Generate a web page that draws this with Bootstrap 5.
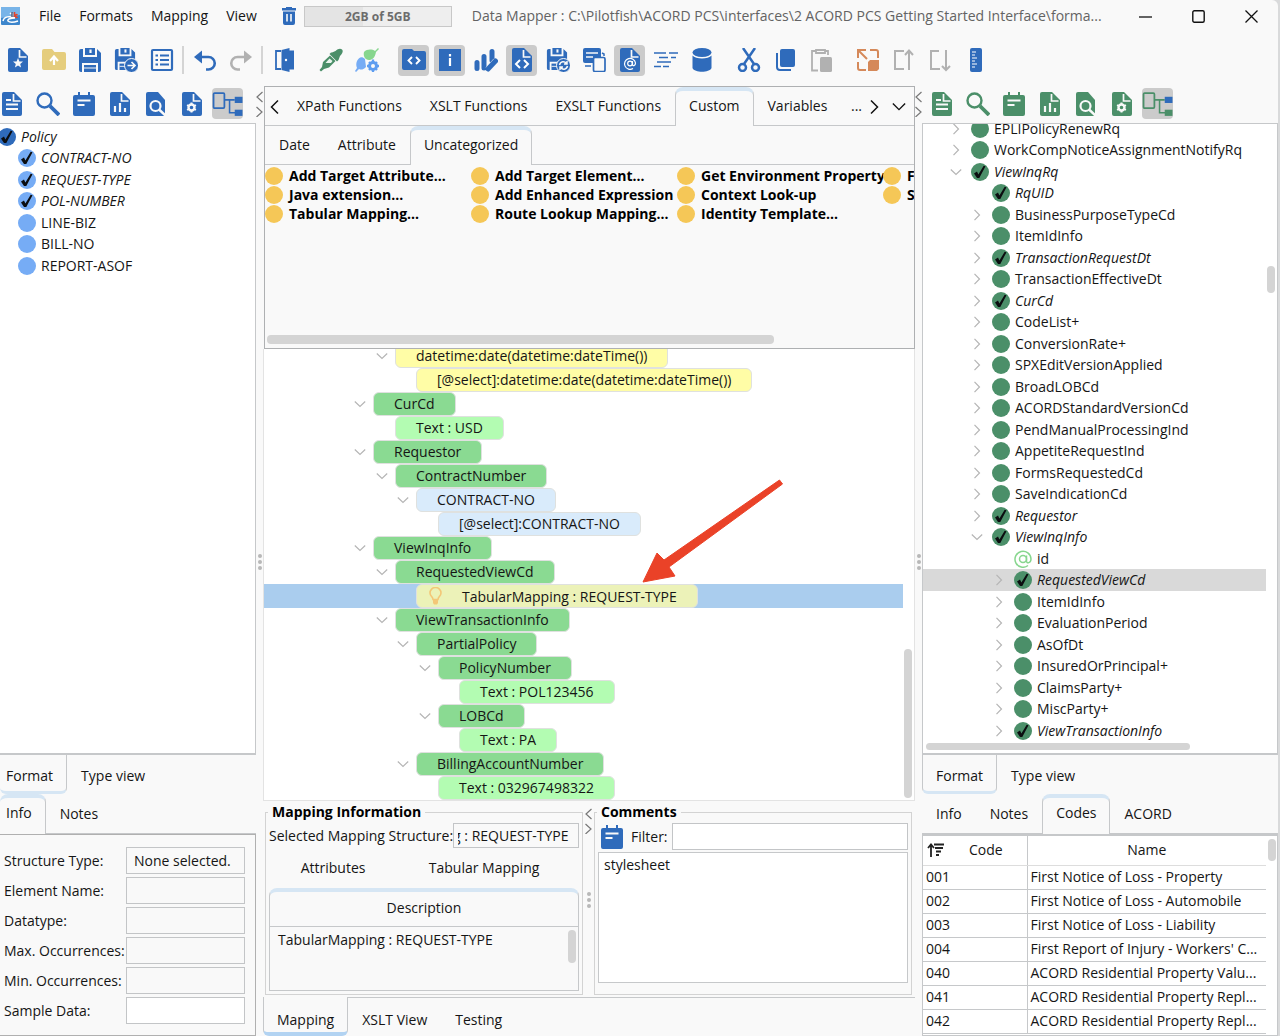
<!DOCTYPE html>
<html lang="en">
<head>
<meta charset="utf-8">
<meta name="viewport" content="width=device-width, initial-scale=1">
<title>Data Mapper</title>
<link rel="stylesheet" href="https://cdn.jsdelivr.net/npm/bootstrap@5.3.0/dist/css/bootstrap.min.css">
<style>
:root{--blue:#2f6bbb;--green:#4b8f69;--line:#c6c8ca;--bg:#f9f9f9}
body{background:#d9dadb;font-family:"Open Sans","Noto Sans",sans-serif;font-size:14px;line-height:20px;color:#151515;white-space:nowrap}
button,input,textarea{font:inherit;color:inherit}
.app{height:100vh;margin-right:2px;background:var(--bg);border-top-right-radius:6px;overflow:hidden}
.bare{border:0;background:none;padding:0;color:inherit}
.titlebar{height:32px}
.menus{gap:18px;margin:0 25px 0 18px}
.menu-link{color:#151515;text-decoration:none}
.mem{width:148px;height:21px;border:1px solid #c8c8c8;background:linear-gradient(90deg,#e4e4e4 40%,#eeeeee 40%);font-weight:700;font-size:12px;line-height:20px;color:#6c6c6c}
.title-text{color:#636363}
.toolbar{height:54px;gap:5px;padding:2px 0 0 2px}
.tool{width:31px;height:31px;border:0;border-radius:4px;background:none;padding:0;color:var(--blue);display:flex;align-items:center;justify-content:center;flex:none}
.tool.on{background:#cbcbcb}
.tool svg{width:24px;height:24px}
.tool.off{color:#b1b1b1}
.vsep{width:2px;height:28px;background:#d4d4d4}
.space{width:6px}
.work{display:grid;grid-template-columns:256fr 7px 652fr 7px 356fr;flex:1;min-height:0}
.side,.center{display:flex;flex-direction:column;min-width:0;min-height:0}
.sidebar-tools{height:37px;gap:5px;flex:none;padding-bottom:2px}
.sidebar-tools.src{margin-left:-4px}
.sidebar-tools.dst{padding-left:4px}
.dst .tool{color:var(--green)}
.treebox{flex:1;min-height:0;background:#fff;border:1px solid var(--line);border-bottom-width:2px;overflow:hidden;position:relative}
.src-box{border-left:0}
.tr-row{height:21px;display:flex;align-items:center}
.tr-row:nth-child(even){height:22px}
.it{font-style:italic}
.in1{padding-left:27px}.in2{padding-left:48px}.in3{padding-left:70px}
.chev{width:12px;height:12px;margin-right:9px;color:#b5b5b5;flex:none}
.dot{width:18px;height:18px;margin-right:5px;flex:none;color:#76acf5}
.dot.g{color:var(--green)}.dot.b{color:var(--blue)}.dot.y{color:#f5c757;margin-right:6px}
.tree-src{margin:2px 0 0 -2px}
.tree-src .kid{padding-left:20px}
.tree-dst{margin-top:-6px;width:343px}
.picked{background:#d9d9d9}
.thumb{position:absolute;background:#d4d4d4;border-radius:4px}
.v-dst{width:8px;right:2px;top:142px;height:27px}
.h-dst{height:7px;left:3px;bottom:3px;width:264px}
.gutter{position:relative;color:#777;display:flex;flex-direction:column;align-items:center}
.gutter .arrows{width:9px;height:26px;margin-top:5px;flex:none}
.gutter .grip{position:absolute;top:50%;margin-top:-7px;width:4px;height:16px}
.tabrow{display:flex;align-items:stretch;flex:none;height:40px}
.palette .tabrow{height:39px}
.tb{border:0;background:none;padding:0 14px;color:inherit;display:flex;align-items:center;justify-content:center;flex:none;text-decoration:none}
.topline{border-bottom:1px solid var(--line)}
.topline .tb.act{border:1px solid var(--line);border-top:4px solid #d6e6f4;border-bottom:0;border-radius:8px 8px 0 0;margin-bottom:-1px;background:var(--bg);padding:0 13px 6px}
.botline{height:39px}
.botline .tb{padding-top:2px}
.botline .tb.act{border:1px solid var(--line);border-bottom:3px solid #d6e6f4;border-top:0;border-radius:0 0 6px 6px;background:var(--bg);padding:5px 13px 0}
.src-tabs .tb.act:first-child{border-left:0;padding-left:6px}
.info{border:1px solid #b0b0b0;border-left:0;padding:12px 10px 11px 4px;display:grid;grid-template-columns:122px 1fr;row-gap:3px;align-items:center;flex:none}
.fld{height:27px;width:100%;min-width:0;border:1px solid #c3c5c7;border-radius:0;background:var(--bg);padding:0 7px}
.fld.w{background:#fff}
.palette{border:1px solid #aeb0b2;height:263px;flex:none;overflow:hidden;position:relative;margin-left:1px}
.fn-list{display:grid;grid-template-columns:repeat(4,206px);grid-auto-rows:19px;align-items:center;padding-top:1px}
.fn-list button{border:0;background:none;padding:0;display:flex;align-items:center;font-weight:700;height:19px;color:#000}
.h-pal{height:9px;left:2px;bottom:4px;width:507px}
.maptree{flex:1;min-height:0;background:#fff;border:1px solid #e3e3e3;border-top:0;overflow:hidden;position:relative}
.maplist{margin-top:-5px;width:639px}
.mrow{height:24px;display:flex;align-items:center}
.m0{padding-left:90px}.m1{padding-left:112px}.m2{padding-left:133px}.m3{padding-left:155px}.m4{padding-left:176px}
.mrow .chev{margin-right:7px}
.leaf::before{content:"";width:19px;flex:none}
.node{height:24px;border:1px solid #dfe1df;border-radius:6px;padding:0 20px;line-height:21px}
.ng{background:#8ada92}.nl{background:#b3fcb2}.ny{background:#fffda6}.nb{background:#d9ebfb}.nh{background:#ecf2b8}
.hit{background:#aacdee}
.v-map{width:8px;right:2px;bottom:2px;height:149px}
.pointer{position:absolute;left:370px;top:126px;width:156px;height:114px}
.lower{height:196px;flex:none;display:grid;grid-template-columns:318fr 11px 318fr;padding:2px 3px 2px 2px}
fieldset.grp{border:1px solid #d3d3d3;padding:0 3px 3px;min-width:0;display:flex;flex-direction:column}
.grp legend{float:none;width:auto;font-size:14px;font-weight:700;line-height:18px;margin:0 0 0 -1px;padding:0 4px;color:#000}
.sel-row{margin-top:2px}
.clip-fld{height:25px;text-indent:-5px;padding:0 4px}
.desc-tab{height:39px;flex:none;border:1px solid var(--line);border-top:4px solid #d6e6f4;border-radius:8px 8px 0 0;padding-bottom:3px}
.desc-body{border:1px solid var(--line);border-top:0;height:64px;flex:none;position:relative;padding:3px 8px}
.v-desc{width:8px;right:2px;top:3px;height:33px}
.note-btn{margin-left:-2px}
.cm-text{border:1px solid var(--line);border-radius:0;resize:none;height:131px;padding:2px 5px;width:100%;display:block}
.bottom-tabs{border-top:1px solid var(--line)}
.bottom-tabs .tb{padding-top:6px}
.bottom-tabs .tb.act{border-bottom:4px solid #b2d3f2;margin-top:-1px;padding-top:10px}
.codes{height:202px;flex:none;border:1px solid var(--line);border-top:2px solid var(--line);background:#fff;overflow:hidden;position:relative}
.codes table{width:calc(100% - 11px);table-layout:fixed;border-collapse:collapse}
.codes th{height:29px;font-weight:400;text-align:center;padding:0;border-bottom:1px solid #ddd}
.codes td{height:24px;padding:0 3px;border-bottom:1px solid var(--line);overflow:hidden}
.codes th+th,.codes td+td{border-left:1px solid var(--line)}
.codes col:first-child{width:104px}
.v-codes{width:8px;right:1px;top:3px;height:22px}
</style>
</head>
<body>
<svg width="0" height="0" class="position-absolute" aria-hidden="true">
<defs>
<symbol id="right" viewBox="0 0 12 12"><path d="M3.500 .8 8.500 6l-5 5.200" fill="none" stroke="currentColor" stroke-width="1.200"/></symbol>
<symbol id="down" viewBox="0 0 12 12"><path d="M.8 3.500 6 8.500l5.200-5" fill="none" stroke="currentColor" stroke-width="1.200"/></symbol>
<symbol id="ball" viewBox="0 0 18 18"><circle cx="9" cy="9" r="9" fill="currentColor"/></symbol>
<symbol id="ballcheck" viewBox="0 0 18 18"><circle cx="9" cy="9" r="9" fill="currentColor"/><path d="M3 10.500 6 8.600 7.400 11.500 12.700 2.800 14.500 3.200 8.300 15 6 15z" fill="#0b0d10"/></symbol>
<symbol id="arrows" viewBox="0 0 9 26"><path d="M7.500 1 2 6l5.500 5M1.500 16 7 21l-5.500 5" fill="none" stroke="currentColor" stroke-width="1.200"/></symbol>
<symbol id="grip" viewBox="0 0 4 16"><g fill="#b8b8b8"><circle cx="2" cy="2" r="2"/><circle cx="2" cy="8" r="2"/><circle cx="2" cy="14" r="2"/></g></symbol>
<symbol id="doc" viewBox="0 0 24 24"><path d="M4 0h10l8 8v14a2 2 0 0 1-2 2H4a2 2 0 0 1-2-2V2a2 2 0 0 1 2-2z" fill="currentColor"/><path d="M13.500 2v7h7" fill="none" stroke="#f9f9f9" stroke-width="1.700"/></symbol>
<symbol id="doclines" viewBox="0 0 24 24"><use href="#doc"/><path d="M6 8h5M6 12.500h12M6 17h12" stroke="#f9f9f9" stroke-width="2"/></symbol>
<symbol id="lens" viewBox="0 0 24 24"><circle cx="8.500" cy="8.500" r="7" fill="none" stroke="currentColor" stroke-width="2.400"/><path d="m14 14 9 9" stroke="currentColor" stroke-width="3.800"/></symbol>
<symbol id="notes" viewBox="0 0 24 24"><path d="M3 3h3V0h2v3h8V0h2v3h3a2 2 0 0 1 2 2v17a2 2 0 0 1-2 2H3a2 2 0 0 1-2-2V5a2 2 0 0 1 2-2z" fill="currentColor"/><path d="M5.500 8.500h13M5.500 13h7" stroke="#f9f9f9" stroke-width="2"/></symbol>
<symbol id="docbars" viewBox="0 0 24 24"><use href="#doc"/><path d="M7 20v-6M12 20v-9M17 20v-4" stroke="#f9f9f9" stroke-width="2.200"/></symbol>
<symbol id="doclens" viewBox="0 0 24 24"><path d="M4 0h10l7 8v14a2 2 0 0 1-2 2H4a2 2 0 0 1-2-2V2a2 2 0 0 1 2-2z" fill="currentColor"/><circle cx="11.500" cy="14" r="5" fill="none" stroke="#f9f9f9" stroke-width="2.200"/><path d="m15 17.500 7 6.500" stroke="#f9f9f9" stroke-width="2.400"/></symbol>
<symbol id="docgear" viewBox="0 0 24 24"><use href="#doc"/><circle cx="11.500" cy="15.500" r="3" fill="none" stroke="#f9f9f9" stroke-width="2.400"/><path d="M11.500 10.500v2m0 6v2m-4.400-7.500 1.800 1m5.200 3 1.800 1m-8.800 0 1.800-1m5.200-3 1.800-1" stroke="#f9f9f9" stroke-width="2"/></symbol>
<symbol id="maptree" viewBox="0 0 30 26"><rect x="1.500" y="3" width="10.500" height="14.500" rx="1" fill="none" stroke="currentColor" stroke-width="1.700"/><path d="M12 9.500h10M17 9.500V22h6" fill="none" stroke="currentColor" stroke-width="1.500"/><rect x="22" y="6.500" width="7.500" height="6" fill="#2f6bbb"/><rect x="22" y="19" width="7.500" height="6" fill="currentColor"/></symbol>
<symbol id="floppy" viewBox="0 0 24 24"><path d="M3 1h2v8h14V1l4 4v17a2 2 0 0 1-2 2h-1v-9H4v9H3a2 2 0 0 1-2-2V3a2 2 0 0 1 2-2z" fill="currentColor"/><path d="M7 0h10v7H7z" fill="currentColor"/><path d="M12.500 1.500v3.500" stroke="#f9f9f9" stroke-width="2.200"/><path d="M6 17h12v7H6z" fill="currentColor"/><path d="M6 20h12" stroke="#f9f9f9"/></symbol>
</defs>
</svg>

<div class="app d-flex flex-column">
<header class="titlebar d-flex align-items-center flex-shrink-0">
  <svg class="flex-shrink-0" width="21" height="20" viewBox="0 0 21 20" aria-label="PilotFish"><rect x="1" y="1" width="19" height="18" rx="1" fill="#3d86cc"/><path d="M1 1h19v8L1 12z" fill="#78b4e8"/><path d="M3 15c1-5 7-5 12-3-4 0-8 1-7 3 2 2 7 1 10 0M10 8c2-2 3-1 2 3" fill="none" stroke="#fff" stroke-width="1.500"/><path d="M14.500 6v5M17.500 9c-1.500-1-2 0-2 1s1 2 2 1" fill="none" stroke="#e4452c" stroke-width="1.600"/><path d="M12 6v5" stroke="#28395b" stroke-width="1.200"/></svg>
  <nav class="menus d-flex">
    <a class="menu-link" href="#">File</a><a class="menu-link" href="#">Formats</a><a class="menu-link" href="#">Mapping</a><a class="menu-link" href="#">View</a>
  </nav>
  <button class="bare me-2 lh-1" aria-label="Free memory"><svg width="14" height="18" viewBox="0 0 14 18"><path d="M0 1h4V0h6v1h4v2.500H0zM1 4.500h12V16a2 2 0 0 1-2 2H3a2 2 0 0 1-2-2z" fill="#2f6bbb"/><path d="M5 7v7.500M9 7v7.500" stroke="#f9f9f9" stroke-width="1.600"/></svg></button>
  <div class="mem text-center">2GB of 5GB</div>
  <div class="title-text ms-3 ps-1">Data Mapper : C:\Pilotfish\ACORD PCS\interfaces\2 ACORD PCS Getting Started Interface\forma...</div>
  <div class="ms-auto d-flex align-items-center gap-4 pe-3 me-1">
    <button class="bare lh-1 me-3" aria-label="Minimize"><svg width="13" height="13"><path d="M0 7h13" stroke="#111" stroke-width="1.300"/></svg></button>
    <button class="bare lh-1 me-3" aria-label="Maximize"><svg width="13" height="13"><rect x=".8" y=".8" width="11.400" height="11.400" rx="1.500" fill="none" stroke="#111" stroke-width="1.400"/></svg></button>
    <button class="bare lh-1" aria-label="Close"><svg width="13" height="13"><path d="m.5.5 12 12m0-12-12 12" stroke="#111" stroke-width="1.300"/></svg></button>
  </div>
</header>

<div class="toolbar d-flex align-items-center flex-shrink-0" role="toolbar">
  <button class="tool" aria-label="New"><svg viewBox="0 0 24 24"><use href="#doc"/><path d="m12 10 1.400 3.400 3.600.2-2.800 2.400.9 3.500-3.100-1.900-3.100 1.900.9-3.500L7 13.600l3.600-.2z" fill="#f9f9f9"/></svg></button>
  <button class="tool" aria-label="Open"><svg viewBox="0 0 24 24"><path d="M2 1h8l2.500 3H22a2 2 0 0 1 2 2v14a2 2 0 0 1-2 2H2a2 2 0 0 1-2-2V3a2 2 0 0 1 2-2z" fill="#e5cd7d"/><path d="M12 17V9m-4 4 4-4.500 4 4.500" fill="none" stroke="#fff" stroke-width="2.200"/></svg></button>
  <button class="tool" aria-label="Save"><svg><use href="#floppy"/></svg></button>
  <button class="tool" aria-label="Save as"><svg viewBox="0 0 24 24"><use href="#floppy" width="22" height="22"/><circle cx="17.500" cy="17.500" r="7" fill="#2f6bbb" stroke="#f9f9f9"/><path d="M13.500 17.500h7m-3-3.500 3.500 3.500-3.500 3.500" fill="none" stroke="#f9f9f9" stroke-width="1.700"/></svg></button>
  <button class="tool" aria-label="List"><svg viewBox="0 0 24 24"><rect x="2" y="2" width="20" height="20" rx="1" fill="none" stroke="currentColor" stroke-width="2.200"/><path d="M5.500 7.500h2.500M5.500 12h2.500M5.500 16.500h2.500M10 7.500h9M10 12h9M10 16.500h9" stroke="currentColor" stroke-width="2.200"/></svg></button>
  <span class="vsep"></span>
  <button class="tool" aria-label="Undo"><svg viewBox="0 0 24 24"><path d="M5 9h10.500a6 6 0 0 1 0 12.500H13" fill="none" stroke="currentColor" stroke-width="2.600"/><path d="m1 9 8-6.500v13z" fill="currentColor"/></svg></button>
  <button class="tool off" aria-label="Redo"><svg viewBox="0 0 24 24"><path d="M19 9H8.500a6 6 0 0 0 0 12.500H11" fill="none" stroke="currentColor" stroke-width="2.600"/><path d="m23 9-8-6.500v13z" fill="currentColor"/></svg></button>
  <span class="vsep"></span>
  <button class="tool" aria-label="Exit"><svg viewBox="0 0 24 24"><path d="M9 3H4v18h5" fill="none" stroke="currentColor" stroke-width="1.800"/><path d="m9.500 2 8-2v24l-8-2zM17 2.500h5v19h-5z" fill="currentColor"/><circle cx="14" cy="12" r="1.200" fill="#fff"/></svg></button>
  <span class="space"></span>
  <button class="tool" aria-label="Pick"><svg viewBox="0 0 24 24" fill="#4b8f69"><path d="M13 4.500 16.500 3C19 .5 21.500 0 23 1.500s.5 4-2 6.500L19.500 12 18 13.500 10.500 6 12 4.500z"/><path d="m11 7.500 5.500 5.500-6.500 6.500-5 1.500-3 2.500L.5 22 3 19l1-5z"/><path d="m10.500 10.500-4 4.500h5.500l1.500-2z" fill="#eaf5ee"/></svg></button>
  <button class="tool" aria-label="Mapping options"><svg viewBox="0 0 24 24"><path d="M9 4c3-3 8-3 11-1l3-3 1 1-3 3c-1 6-4 8-7 8-4 0-6-4-5-8z" fill="#87d68e"/><path d="M2 13c2-4 5-5 8-2l1 8c-3 3-5 3-7 2l-3 3-1-1 2-3c-1-2-1-5 0-7z" fill="#76acf5"/><circle cx="18" cy="18" r="3.500" fill="none" stroke="#5e9df0" stroke-width="3"/><path d="M18 11.500v3m0 7v3M12 18h2.500m7 0H24m-10-4 1.500 1.500m5 5L22 22m-8 0 1.500-1.500m5-5L22 14" stroke="#5e9df0" stroke-width="2.300"/></svg></button>
  <span class="space"></span>
  <button class="tool on" aria-label="Code folder"><svg viewBox="0 0 24 24"><path d="M2 1h8l2 2h10a2 2 0 0 1 2 2v15a2 2 0 0 1-2 2H2a2 2 0 0 1-2-2V3a2 2 0 0 1 2-2z" fill="currentColor"/><path d="m10 9-3.500 3.500L10 16m4-7 3.500 3.500L14 16" fill="none" stroke="#fff" stroke-width="1.900"/></svg></button>
  <button class="tool on" aria-label="Info"><svg viewBox="0 0 24 24"><path d="M1 1h22v22H1z" fill="currentColor"/><path d="M12 6v2.500M12 10v8" stroke="#fff" stroke-width="2.200"/></svg></button>
  <button class="tool" aria-label="Chart"><svg viewBox="0 0 24 24"><path d="M3 14.500v6M10 8.500V20M18 3.500v9" stroke="currentColor" stroke-width="5" stroke-linecap="round"/><path d="m14 22 8-9" stroke="#f9f9f9" stroke-width="6.500"/><path d="m14 21 7.500-8" stroke="currentColor" stroke-width="5" stroke-linecap="round"/></svg></button>
  <button class="tool on" aria-label="Code file"><svg viewBox="0 0 24 24"><use href="#doc"/><path d="m10 12-4 4 4 4m4-8 4 4-4 4" fill="none" stroke="#fff" stroke-width="2"/></svg></button>
  <button class="tool" aria-label="Save and refresh"><svg viewBox="0 0 24 24"><use href="#floppy" width="22" height="22"/><circle cx="17.500" cy="17.500" r="7" fill="#2f6bbb" stroke="#f9f9f9"/><path d="M13.500 17c1-4 5-4 7-1.500M21 13v3h-3M21.500 18c-1 4-5 4-7 1.500M14 22v-3h3" fill="none" stroke="#f9f9f9" stroke-width="1.500"/></svg></button>
  <button class="tool" aria-label="Copy notes"><svg viewBox="0 0 24 24"><path d="M3 0h14a2 2 0 0 1 2 2v13H3a2 2 0 0 1-2-2V2a2 2 0 0 1 2-2z" fill="currentColor"/><path d="M4 5h12M4 9h7" stroke="#f9f9f9" stroke-width="1.700"/><rect x="11.500" y="9.500" width="11.500" height="14" rx="1.500" fill="#f9f9f9" stroke="currentColor" stroke-width="1.700"/><path d="M3 18h6M20 5l2 1v2" stroke="currentColor" stroke-width="1.500" fill="none"/></svg></button>
  <button class="tool on" aria-label="Attributes"><svg viewBox="0 0 24 24"><use href="#doc"/><path d="M15 20.500A5.500 5.500 0 1 1 17.500 15c0 3-3 3.500-3 1.500v-3.500" fill="none" stroke="#fff" stroke-width="1.200"/><circle cx="12" cy="15.500" r="2.300" fill="none" stroke="#fff" stroke-width="1.200"/></svg></button>
  <button class="tool" aria-label="Format"><svg viewBox="0 0 24 24"><path d="M0 5h12m3 0h9M5 9.500h9m3 0h5M3 14h14M0 18.500h7m2 0h6" stroke="currentColor" stroke-width="1.600"/></svg></button>
  <button class="tool" aria-label="Database"><svg viewBox="0 0 24 24"><ellipse cx="12" cy="4.500" rx="9.500" ry="4.500" fill="currentColor"/><path d="M2.500 7.500c3 4 16 4 19 0V20c-2 5-17 5-19 0z" fill="currentColor"/></svg></button>
  <span class="space"></span>
  <button class="tool" aria-label="Cut"><svg viewBox="0 0 24 24" fill="none" stroke="currentColor" stroke-width="2.500"><path d="M6 0l11 16M18 0 7 16"/><circle cx="5.500" cy="19.500" r="3.500"/><circle cx="18.500" cy="19.500" r="3.500"/></svg></button>
  <button class="tool" aria-label="Copy"><svg viewBox="0 0 24 24"><rect x="7" y="1" width="15" height="18" rx="2" fill="currentColor"/><path d="M4 5v14q0 3 3 3h11" fill="none" stroke="currentColor" stroke-width="2"/></svg></button>
  <button class="tool off" aria-label="Paste"><svg viewBox="0 0 24 24"><path d="M9 22.500H3V3h4m9 0h3v4M7 2h9v3H7z" fill="none" stroke="currentColor" stroke-width="1.800"/><rect x="11" y="9" width="12" height="15" rx="1.500" fill="currentColor"/></svg></button>
  <span class="space"></span>
  <button class="tool" aria-label="Collapse"><svg viewBox="0 0 24 24" fill="none" stroke="#d5895a" stroke-width="2"><path d="M14 2h6q2 0 2 2v6M2 14v6q0 2 2 2h6M2 10V2h8M3 3l8 8"/><path d="M14 12h9v9l-2 2h-9v-9z" fill="#d5895a" stroke="none"/></svg></button>
  <button class="tool off" aria-label="Move up"><svg viewBox="0 0 24 24" fill="none" stroke="currentColor" stroke-width="2"><path d="M12 3H3v18h9m5 1V3m-4 4 4-4.500L21 7"/></svg></button>
  <button class="tool off" aria-label="Move down"><svg viewBox="0 0 24 24" fill="none" stroke="currentColor" stroke-width="2"><path d="M11 3H3v18h9m6-19v20m-4-4 4 4 4-4"/></svg></button>
  <button class="tool" aria-label="Ruler"><svg viewBox="0 0 24 24"><rect x="6" y="0" width="12" height="24" rx="2" fill="currentColor"/><path d="M8 4h4M8 7h3M8 10h5M8 13h3M8 16h5M8 19h3" stroke="#fff" stroke-width="1.200"/></svg></button>
</div>

<main class="work">
<section class="side">
  <div class="sidebar-tools src d-flex align-items-center">
    <button class="tool" aria-label="Source document"><svg><use href="#doclines"/></svg></button>
    <button class="tool" aria-label="Search source"><svg><use href="#lens"/></svg></button>
    <button class="tool" aria-label="Source notes"><svg><use href="#notes"/></svg></button>
    <button class="tool" aria-label="Source statistics"><svg><use href="#docbars"/></svg></button>
    <button class="tool" aria-label="Preview source"><svg><use href="#doclens"/></svg></button>
    <button class="tool" aria-label="Source settings"><svg><use href="#docgear"/></svg></button>
    <button class="tool on" aria-label="Source tree"><svg class="w-100 h-100"><use href="#maptree"/></svg></button>
  </div>
  <div class="treebox src-box"><div class="tree-src">
    <div class="tr-row it"><svg class="dot b"><use href="#ballcheck"/></svg>Policy</div>
    <div class="tr-row it kid"><svg class="dot"><use href="#ballcheck"/></svg>CONTRACT-NO</div>
    <div class="tr-row it kid"><svg class="dot"><use href="#ballcheck"/></svg>REQUEST-TYPE</div>
    <div class="tr-row it kid"><svg class="dot"><use href="#ballcheck"/></svg>POL-NUMBER</div>
    <div class="tr-row kid"><svg class="dot"><use href="#ball"/></svg>LINE-BIZ</div>
    <div class="tr-row kid"><svg class="dot"><use href="#ball"/></svg>BILL-NO</div>
    <div class="tr-row kid"><svg class="dot"><use href="#ball"/></svg>REPORT-ASOF</div>
  </div></div>
  <div class="tabrow botline src-tabs"><button class="tb act">Format</button><button class="tb">Type view</button></div>
  <div class="tabrow topline src-tabs"><button class="tb act">Info</button><button class="tb">Notes</button></div>
  <form class="info">
    <label for="f1">Structure Type:</label><input id="f1" class="fld" value="None selected." readonly>
    <label for="f2">Element Name:</label><input id="f2" class="fld" readonly>
    <label for="f3">Datatype:</label><input id="f3" class="fld" readonly>
    <label for="f4">Max. Occurrences:</label><input id="f4" class="fld" readonly>
    <label for="f5">Min. Occurrences:</label><input id="f5" class="fld" readonly>
    <label for="f6">Sample Data:</label><input id="f6" class="fld w">
  </form>
</section>
<div class="gutter"><svg class="arrows"><use href="#arrows"/></svg><svg class="grip"><use href="#grip"/></svg></div>

<section class="center">
  <div class="palette">
    <div class="tabrow topline">
      <button class="bare ps-1" aria-label="Scroll left"><svg width="14" height="16" viewBox="0 0 14 16"><path d="M9 1.500 2.500 8 9 14.500" fill="none" stroke="#111" stroke-width="1.500"/></svg></button>
      <button class="tb">XPath Functions</button><button class="tb">XSLT Functions</button><button class="tb">EXSLT Functions</button><button class="tb act">Custom</button><button class="tb">Variables</button>
      <span class="ms-auto d-flex align-items-center gap-2 pe-1"><span>...</span>
      <button class="bare" aria-label="Scroll right"><svg width="10" height="16" viewBox="0 0 10 16"><path d="M1 1.500 7.500 8 1 14.500" fill="none" stroke="#111" stroke-width="1.500"/></svg></button>
      <button class="bare ms-1 me-1" aria-label="More tabs"><svg width="14" height="10" viewBox="0 0 16 10"><path d="M1 1 8 8l7-7" fill="none" stroke="#111" stroke-width="1.600"/></svg></button></span>
    </div>
    <div class="tabrow topline"><button class="tb">Date</button><button class="tb">Attribute</button><button class="tb act">Uncategorized</button></div>
    <div class="fn-list">
      <button><svg class="dot y"><use href="#ball"/></svg>Add Target Attribute...</button><button><svg class="dot y"><use href="#ball"/></svg>Add Target Element...</button><button><svg class="dot y"><use href="#ball"/></svg>Get Environment Property</button><button><svg class="dot y"><use href="#ball"/></svg>F</button>
      <button><svg class="dot y"><use href="#ball"/></svg>Java extension...</button><button><svg class="dot y"><use href="#ball"/></svg>Add Enhanced Expression</button><button><svg class="dot y"><use href="#ball"/></svg>Context Look-up</button><button><svg class="dot y"><use href="#ball"/></svg>S</button>
      <button><svg class="dot y"><use href="#ball"/></svg>Tabular Mapping...</button><button><svg class="dot y"><use href="#ball"/></svg>Route Lookup Mapping...</button><button><svg class="dot y"><use href="#ball"/></svg>Identity Template...</button>
    </div>
    <div class="thumb h-pal"></div>
  </div>
  <div class="maptree">
    <div class="maplist">
      <div class="mrow m1"><svg class="chev"><use href="#down"/></svg><span class="node ny">datetime:date(datetime:dateTime())</span></div>
      <div class="mrow m2 leaf"><span class="node ny">[@select]:datetime:date(datetime:dateTime())</span></div>
      <div class="mrow m0"><svg class="chev"><use href="#down"/></svg><span class="node ng">CurCd</span></div>
      <div class="mrow m1 leaf"><span class="node nl">Text : USD</span></div>
      <div class="mrow m0"><svg class="chev"><use href="#down"/></svg><span class="node ng">Requestor</span></div>
      <div class="mrow m1"><svg class="chev"><use href="#down"/></svg><span class="node ng">ContractNumber</span></div>
      <div class="mrow m2"><svg class="chev"><use href="#down"/></svg><span class="node nb">CONTRACT-NO</span></div>
      <div class="mrow m3 leaf"><span class="node nb">[@select]:CONTRACT-NO</span></div>
      <div class="mrow m0"><svg class="chev"><use href="#down"/></svg><span class="node ng">ViewInqInfo</span></div>
      <div class="mrow m1"><svg class="chev"><use href="#down"/></svg><span class="node ng">RequestedViewCd</span></div>
      <div class="mrow m2 leaf hit"><span class="node nh d-flex align-items-center ps-2"><svg class="me-3 ms-1" width="13" height="18" viewBox="0 0 13 18"><path d="M4 12.500C4 10 1 9 1 6a5.500 5.500 0 0 1 11 0c0 3-3 4-3 6.500z" fill="none" stroke="#f3c777" stroke-width="1.600"/><path d="M4 13h5v3l-1 1.500H5L4 16z" fill="#f3c777"/></svg><span class="ps-1">TabularMapping : REQUEST-TYPE</span></span></div>
      <div class="mrow m1"><svg class="chev"><use href="#down"/></svg><span class="node ng">ViewTransactionInfo</span></div>
      <div class="mrow m2"><svg class="chev"><use href="#down"/></svg><span class="node ng">PartialPolicy</span></div>
      <div class="mrow m3"><svg class="chev"><use href="#down"/></svg><span class="node ng">PolicyNumber</span></div>
      <div class="mrow m4 leaf"><span class="node nl">Text : POL123456</span></div>
      <div class="mrow m3"><svg class="chev"><use href="#down"/></svg><span class="node ng">LOBCd</span></div>
      <div class="mrow m4 leaf"><span class="node nl">Text : PA</span></div>
      <div class="mrow m2"><svg class="chev"><use href="#down"/></svg><span class="node ng">BillingAccountNumber</span></div>
      <div class="mrow m3 leaf"><span class="node nl">Text : 032967498322</span></div>
    </div>
    <svg class="pointer" viewBox="0 0 156 114"><path d="M145.500 5 148.500 9 35 92 41 101 9 107 23 78 30 85z" fill="#ea4228" stroke="#ea4228" stroke-linejoin="round"/></svg>
    <div class="thumb v-map"></div>
  </div>
  <div class="lower">
    <fieldset class="grp"><legend>Mapping Information</legend>
      <div class="sel-row d-flex align-items-center"><label for="sel">Selected Mapping Structure:</label><input id="sel" class="fld clip-fld" value="g : REQUEST-TYPE" readonly></div>
      <div class="d-flex justify-content-around flex-fill align-items-center pe-2"><button class="bare">Attributes</button><button class="bare">Tabular Mapping</button></div>
      <button class="bare desc-tab">Description</button>
      <div class="desc-body">TabularMapping : REQUEST-TYPE<div class="thumb v-desc"></div></div>
    </fieldset>
    <div class="gutter"><svg class="arrows"><use href="#arrows"/></svg><svg class="grip"><use href="#grip"/></svg></div>
    <fieldset class="grp"><legend>Comments</legend>
      <div class="d-flex align-items-center"><button class="tool note-btn" aria-label="Comment notes"><svg><use href="#notes"/></svg></button><label for="flt" class="ms-1 me-1">Filter:</label><input id="flt" class="fld w"></div>
      <textarea class="cm-text" aria-label="Comments">stylesheet</textarea>
    </fieldset>
  </div>
  <div class="tabrow botline bottom-tabs"><button class="tb act">Mapping</button><button class="tb">XSLT View</button><button class="tb">Testing</button></div>
</section>
<div class="gutter"><svg class="arrows"><use href="#arrows"/></svg><svg class="grip"><use href="#grip"/></svg></div>

<section class="side">
  <div class="sidebar-tools dst d-flex align-items-center">
    <button class="tool" aria-label="Target document"><svg><use href="#doclines"/></svg></button>
    <button class="tool" aria-label="Search target"><svg><use href="#lens"/></svg></button>
    <button class="tool" aria-label="Target notes"><svg><use href="#notes"/></svg></button>
    <button class="tool" aria-label="Target statistics"><svg><use href="#docbars"/></svg></button>
    <button class="tool" aria-label="Preview target"><svg><use href="#doclens"/></svg></button>
    <button class="tool" aria-label="Target settings"><svg><use href="#docgear"/></svg></button>
    <button class="tool on" aria-label="Target tree"><svg class="w-100 h-100"><use href="#maptree"/></svg></button>
  </div>
  <div class="treebox"><div class="tree-dst">
    <div class="tr-row in1"><svg class="chev"><use href="#right"/></svg><svg class="dot g"><use href="#ball"/></svg>EPLIPolicyRenewRq</div>
    <div class="tr-row in1"><svg class="chev"><use href="#right"/></svg><svg class="dot g"><use href="#ball"/></svg>WorkCompNoticeAssignmentNotifyRq</div>
    <div class="tr-row in1 it"><svg class="chev"><use href="#down"/></svg><svg class="dot g"><use href="#ballcheck"/></svg>ViewInqRq</div>
    <div class="tr-row in2 it"><svg class="chev"></svg><svg class="dot g"><use href="#ballcheck"/></svg>RqUID</div>
    <div class="tr-row in2"><svg class="chev"><use href="#right"/></svg><svg class="dot g"><use href="#ball"/></svg>BusinessPurposeTypeCd</div>
    <div class="tr-row in2"><svg class="chev"><use href="#right"/></svg><svg class="dot g"><use href="#ball"/></svg>ItemIdInfo</div>
    <div class="tr-row in2 it"><svg class="chev"><use href="#right"/></svg><svg class="dot g"><use href="#ballcheck"/></svg>TransactionRequestDt</div>
    <div class="tr-row in2"><svg class="chev"><use href="#right"/></svg><svg class="dot g"><use href="#ball"/></svg>TransactionEffectiveDt</div>
    <div class="tr-row in2 it"><svg class="chev"><use href="#right"/></svg><svg class="dot g"><use href="#ballcheck"/></svg>CurCd</div>
    <div class="tr-row in2"><svg class="chev"><use href="#right"/></svg><svg class="dot g"><use href="#ball"/></svg>CodeList+</div>
    <div class="tr-row in2"><svg class="chev"><use href="#right"/></svg><svg class="dot g"><use href="#ball"/></svg>ConversionRate+</div>
    <div class="tr-row in2"><svg class="chev"><use href="#right"/></svg><svg class="dot g"><use href="#ball"/></svg>SPXEditVersionApplied</div>
    <div class="tr-row in2"><svg class="chev"><use href="#right"/></svg><svg class="dot g"><use href="#ball"/></svg>BroadLOBCd</div>
    <div class="tr-row in2"><svg class="chev"><use href="#right"/></svg><svg class="dot g"><use href="#ball"/></svg>ACORDStandardVersionCd</div>
    <div class="tr-row in2"><svg class="chev"><use href="#right"/></svg><svg class="dot g"><use href="#ball"/></svg>PendManualProcessingInd</div>
    <div class="tr-row in2"><svg class="chev"><use href="#right"/></svg><svg class="dot g"><use href="#ball"/></svg>AppetiteRequestInd</div>
    <div class="tr-row in2"><svg class="chev"><use href="#right"/></svg><svg class="dot g"><use href="#ball"/></svg>FormsRequestedCd</div>
    <div class="tr-row in2"><svg class="chev"><use href="#right"/></svg><svg class="dot g"><use href="#ball"/></svg>SaveIndicationCd</div>
    <div class="tr-row in2 it"><svg class="chev"><use href="#right"/></svg><svg class="dot g"><use href="#ballcheck"/></svg>Requestor</div>
    <div class="tr-row in2 it"><svg class="chev"><use href="#down"/></svg><svg class="dot g"><use href="#ballcheck"/></svg>ViewInqInfo</div>
    <div class="tr-row in3"><svg class="chev"></svg><svg class="dot" viewBox="0 0 18 18" fill="none" stroke="#87d68e" stroke-width="1.500"><path d="M14 15.500A8 8 0 1 1 17 9c0 4-4.500 5-4.500 2V5.500"/><circle cx="9" cy="9" r="3.500"/></svg>id</div>
    <div class="tr-row in3 it picked"><svg class="chev"><use href="#right"/></svg><svg class="dot g"><use href="#ballcheck"/></svg>RequestedViewCd</div>
    <div class="tr-row in3"><svg class="chev"><use href="#right"/></svg><svg class="dot g"><use href="#ball"/></svg>ItemIdInfo</div>
    <div class="tr-row in3"><svg class="chev"><use href="#right"/></svg><svg class="dot g"><use href="#ball"/></svg>EvaluationPeriod</div>
    <div class="tr-row in3"><svg class="chev"><use href="#right"/></svg><svg class="dot g"><use href="#ball"/></svg>AsOfDt</div>
    <div class="tr-row in3"><svg class="chev"><use href="#right"/></svg><svg class="dot g"><use href="#ball"/></svg>InsuredOrPrincipal+</div>
    <div class="tr-row in3"><svg class="chev"><use href="#right"/></svg><svg class="dot g"><use href="#ball"/></svg>ClaimsParty+</div>
    <div class="tr-row in3"><svg class="chev"><use href="#right"/></svg><svg class="dot g"><use href="#ball"/></svg>MiscParty+</div>
    <div class="tr-row in3 it"><svg class="chev"><use href="#right"/></svg><svg class="dot g"><use href="#ballcheck"/></svg>ViewTransactionInfo</div>
  </div><div class="thumb v-dst"></div><div class="thumb h-dst"></div></div>
  <div class="tabrow botline"><button class="tb act">Format</button><button class="tb">Type view</button></div>
  <div class="tabrow topline"><button class="tb">Info</button><button class="tb">Notes</button><button class="tb act">Codes</button><button class="tb">ACORD</button></div>
  <div class="codes">
    <table><colgroup><col><col></colgroup>
      <thead><tr><th><span class="d-flex align-items-center ps-1"><svg width="18" height="14" viewBox="0 0 18 14"><path d="M4 14V2M1 5l3-3.500L7 5" fill="none" stroke="#222" stroke-width="1.800"/><path d="M7 1.500h10M8 5h8M9 8.500h5M9 12h3" stroke="#222" stroke-width="1.800"/></svg><span class="ms-4">Code</span></span></th><th>Name</th></tr></thead>
      <tbody>
        <tr><td>001</td><td>First Notice of Loss - Property</td></tr>
        <tr><td>002</td><td>First Notice of Loss - Automobile</td></tr>
        <tr><td>003</td><td>First Notice of Loss - Liability</td></tr>
        <tr><td>004</td><td>First Report of Injury - Workers' C...</td></tr>
        <tr><td>040</td><td>ACORD Residential Property Valu...</td></tr>
        <tr><td>041</td><td>ACORD Residential Property Repl...</td></tr>
        <tr><td>042</td><td>ACORD Residential Property Repl...</td></tr>
      </tbody>
    </table>
    <div class="thumb v-codes"></div>
  </div>
</section>
</main>
</div>
<script src="https://cdn.jsdelivr.net/npm/bootstrap@5.3.0/dist/js/bootstrap.bundle.min.js"></script>
</body>
</html>
